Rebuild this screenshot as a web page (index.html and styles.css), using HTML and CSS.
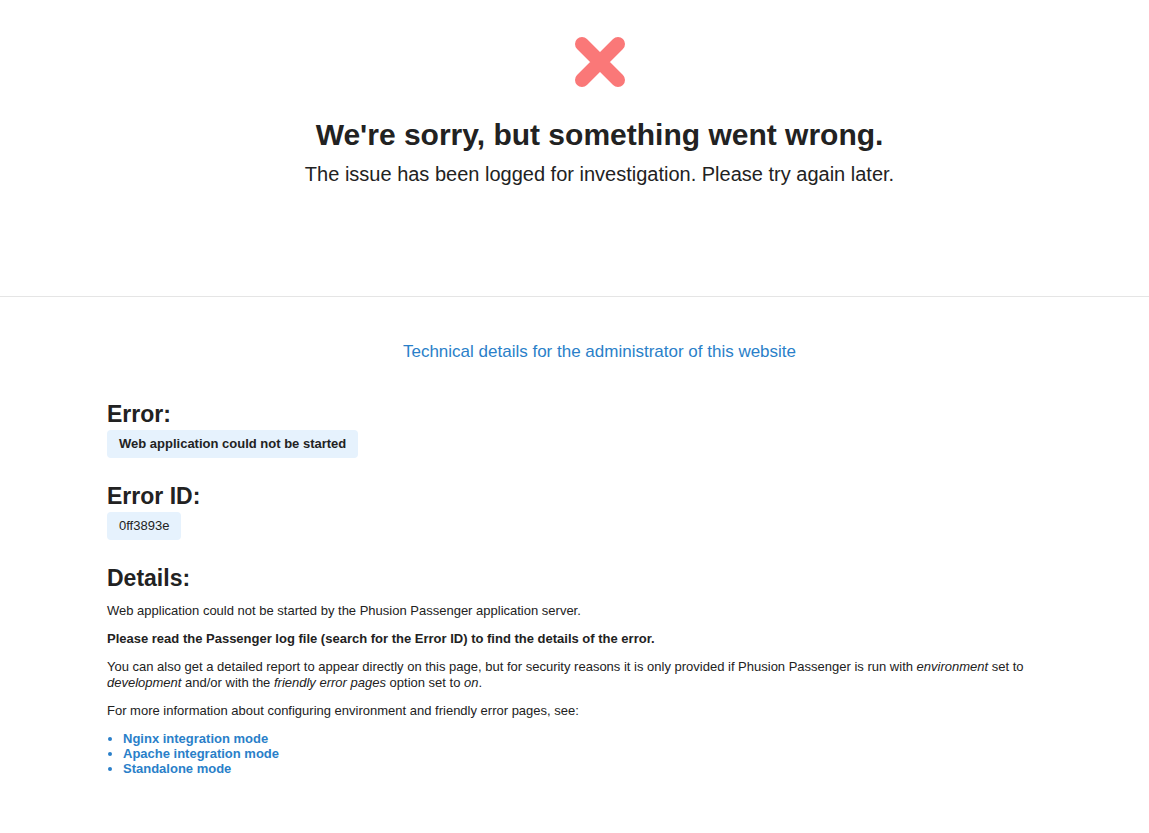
FILE: index.html
```html
<!DOCTYPE html>
<html>
<head>
<meta charset="utf-8">
<title>We're sorry, but something went wrong</title>
<link rel="stylesheet" href="styles.css">
</head>
<body>
<div class="top">
  <div class="icon">
    <svg width="52" height="52" viewBox="0 0 52 52"><path d="M8 8 L44 44 M44 8 L8 44" stroke="#fa7878" stroke-width="14" stroke-linecap="round" fill="none"/></svg>
  </div>
  <h1 class="title">We're sorry, but something went wrong.</h1>
  <p class="subtitle">The issue has been logged for investigation. Please try again later.</p>
</div>
<hr class="divider">
<div class="tech">
  <a class="tech-link" href="#">Technical details for the administrator of this website</a>
</div>
<div class="details">
  <h2 class="heading">Error:</h2>
  <div class="pill pill-bold">Web application could not be started</div>
  <h2 class="heading">Error ID:</h2>
  <div class="pill">0ff3893e</div>
  <h2 class="heading">Details:</h2>
  <p class="para">Web application could not be started by the Phusion Passenger application server.</p>
  <p class="para"><b>Please read the Passenger log file (search for the Error ID) to find the details of the error.</b></p>
  <p class="para">You can also get a detailed report to appear directly on this page, but for security reasons it is only provided if Phusion Passenger is run with <i>environment</i> set to <i>development</i> and/or with the <i>friendly error pages</i> option set to <i>on</i>.</p>
  <p class="para">For more information about configuring environment and friendly error pages, see:</p>
  <ul class="links">
    <li><a href="#">Nginx integration mode</a></li>
    <li><a href="#">Apache integration mode</a></li>
    <li><a href="#">Standalone mode</a></li>
  </ul>
</div>
</body>
</html>
```
FILE: styles.css
```css
html, body {
  margin: 0;
  padding: 0;
  background: #fff;
  color: #222;
  font-family: "Liberation Sans", Arial, sans-serif;
}
.top {
  padding: 36px 0 0 50px;
  text-align: center;
  height: 260px;
  box-sizing: border-box;
}
.icon {
  height: 52px;
  line-height: 0;
}
.title {
  margin: 30px 0 0;
  font-size: 30px;
  font-weight: bold;
  line-height: 34px;
}
.subtitle {
  margin: 10px 0 0;
  font-size: 20px;
  line-height: 24px;
}
.divider {
  margin: 36px 0 0;
  border: 0;
  border-top: 1px solid #e5e5e5;
  height: 0;
}
.tech {
  padding: 45px 0 0 50px;
  text-align: center;
}
.tech-link {
  color: #2a7fc9;
  text-decoration: none;
  font-size: 17px;
  line-height: 20px;
}
.details {
  margin: 39px 57px 0 107px;
}
.heading {
  margin: 0;
  font-size: 23px;
  font-weight: bold;
  line-height: 26px;
}
.pill {
  display: inline-block;
  background: #e6f2fd;
  border-radius: 4px;
  padding: 6px 12px;
  font-size: 13px;
  line-height: 16px;
  margin: 3px 0 25px;
}
.pill-bold {
  font-weight: bold;
}
.para {
  font-size: 13px;
  line-height: 16px;
  margin: 12px 0 0;
}
.links {
  margin: 12px 0 0;
  padding: 0 0 0 16px;
  font-size: 13px;
  line-height: 15px;
  color: #2a7fc9;
}
.links a {
  color: #2a7fc9;
  font-weight: bold;
  text-decoration: none;
}
```
